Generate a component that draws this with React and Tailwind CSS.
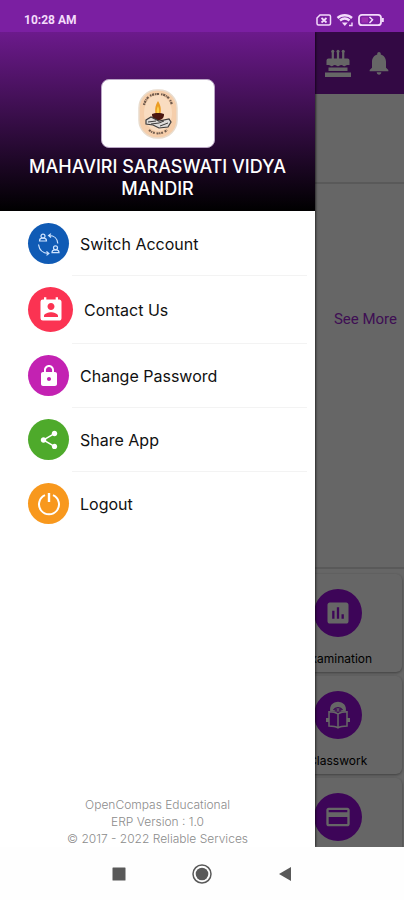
import {
  MdCreditCard,
  MdInsertChart,
  MdLock,
  MdNotifications,
  MdPermContactCalendar,
  MdShare,
} from 'react-icons/md'

function SwitchIcon() {
  return (
    <svg viewBox="0 0 24 24" className="size-6" fill="none" stroke="#cfe4ff" strokeWidth="1.2" aria-hidden="true">
      <circle cx="6" cy="4.2" r="2" />
      <path d="M2.5 9c0-1.6 1-2.6 2.2-2.8h2.6C8.500 6.400 9.500 7.400 9.500 9z" />
      <circle cx="18.500" cy="15.800" r="2" />
      <path d="M15 20.600c0-1.600 1-2.600 2.200-2.800h2.600c1.200.2 2.200 1.200 2.200 2.800z" />
      <path d="M12 3.500c5 0 8.500 3 8.800 8M14 1.600l-2.400 1.900 2.400 2" />
      <path d="M1.500 12.500c.8 5.500 4.500 8.800 9.800 9M9.500 19.400l2.400 2.100-2.400 1.900" />
    </svg>
  )
}

function PowerIcon() {
  return (
    <svg viewBox="0 0 24 24" className="size-6" fill="none" stroke="currentColor" strokeWidth="2" aria-hidden="true">
      <path d="M8 3.200A10 10 0 1 0 16 3.200" />
      <path d="M12 1v9" strokeWidth="2.400" />
    </svg>
  )
}

function CakeIcon() {
  return (
    <svg viewBox="0 0 26 28" className="h-7 w-[26px]" fill="currentColor" aria-hidden="true">
      <path d="M6.700 3h2.200v7H6.700zM11.900 3h2.200v7h-2.200zM17.100 3h2.200v7h-2.200z" />
      <circle cx="7.800" cy="2.200" r="1.500" />
      <circle cx="13" cy="2.200" r="1.500" />
      <circle cx="18.200" cy="2.200" r="1.500" />
      <path d="M3.500 9.500h19a2 2 0 0 1 2 2V16h-2.200c-1.500 0-1.500 1.200-3 1.200S17.700 16 16.200 16s-1.600 1.200-3.200 1.200S11.300 16 9.800 16s-1.600 1.200-3.100 1.200S5.200 16 3.700 16H1.500v-4.500a2 2 0 0 1 2-2z" />
      <path d="M3.500 18.500h19V22h-19zM0 23.500h26V28H0z" />
    </svg>
  )
}

function ReaderIcon() {
  return (
    <svg viewBox="0 0 24 28" className="h-7 w-6" fill="none" stroke="currentColor" strokeWidth="1.500" aria-hidden="true">
      <path d="M5 10.500C4 4.500 7.500 1.500 12 1.500s8 3 7 9" fill="currentColor" />
      <path d="M7.500 9c1-1.800 2.500-2.400 4.500-2.400S15.500 7.200 16.500 9" stroke="#9a0edc" strokeWidth="1.200" />
      <circle cx="10" cy="9" r="1" stroke="#9a0edc" strokeWidth="1" />
      <circle cx="14" cy="9" r="1" stroke="#9a0edc" strokeWidth="1" />
      <path d="M12 13c-2.500-1.800-5-2.300-9-2.300V25c4 0 6.500.3 9 1.800 2.500-1.500 5-1.800 9-1.800V10.700c-4 0-6.500.5-9 2.300zM12 13v13" fill="#9a0edc" />
      <path d="M1.500 17v4M22.500 17v4" strokeWidth="3" />
    </svg>
  )
}

function SchoolLogo() {
  return (
    <svg viewBox="0 0 40 50" className="h-[50px] w-10" role="img" aria-label="School emblem">
      <rect x="1" y="1" width="38" height="48" rx="18" fill="#f5ceab" stroke="#e9dccd" strokeWidth="1.500" />
      <ellipse cx="20" cy="24" rx="14" ry="18" fill="#f9dcc0" />
      <path d="M6 16C8 8 13 5 20 5s12 3 14 11" fill="none" stroke="#6f5a4c" strokeWidth="2.200" strokeDasharray="1.500 .7 2.200 .8 1 .6 2.400 2" />
      <path d="M11 41c5 4.500 13 4.500 18 0" fill="none" stroke="#6f5a4c" strokeWidth="2" strokeDasharray="2 .6 1.300 .8 1.800 1.800" />
      <path d="M20 12c3 5 3.500 9 2 14h-4c-1.500-5-1-9 2-14z" fill="#eb9c24" />
      <path d="M20 17c1.500 3 1.500 6 .5 9h-1.500c-.8-3-.5-6 1-9z" fill="#fbd34d" />
      <path d="M14 25c2-1.500 10-1.500 12 0 0 4-2 6-6 6s-6-2-6-6z" fill="#4a1710" />
      <path d="M8 31l5-3 8 4 10-2 2 3-3 5-9 1-6-3-7-1z" fill="#dddbd9" stroke="#3d3b3b" strokeWidth="1.200" />
      <path d="M10 33l8-1M13 35l8-1 5-2M22 37l8-3" stroke="#3d3b3b" strokeWidth="1" fill="none" />
    </svg>
  )
}

function StatusBar() {
  return (
    <header className="flex h-8 shrink-0 items-center justify-between bg-[#7b1fa2] pt-2 pr-5 pl-6 text-[#f3dcfb]">
      <span className="font-[Roboto,sans-serif] text-xs font-bold">10:28 AM</span>
      <svg viewBox="0 0 68 14" className="h-[14px] w-[68px]" fill="none" stroke="currentColor" strokeWidth="1.500" aria-hidden="true">
        <path d="M4 2h9a1.500 1.500 0 0 1 1.500 1.500v7A1.500 1.500 0 0 1 13 12H2.500A1.500 1.500 0 0 1 1 10.500V5z" />
        <path d="M5.500 5l5 4.500M10.500 5l-5 4.500" strokeWidth="1.700" />
        <path d="M21.500 5c4-3.700 10.500-3.700 14.500 0M24 7.500c3-2.500 6.500-2.500 9.500 0" strokeWidth="2.400" />
        <path d="M25.800 9.500h6L28.800 13z" fill="currentColor" stroke="none" />
        <path d="M33 12.500h3v-3" strokeWidth="1.400" />
        <rect x="43" y="1.800" width="22" height="10.400" rx="3" strokeWidth="1.800" />
        <path d="M66.800 5v4" strokeWidth="2" />
        <path d="M45.500 4.300h6.500v5.400h-6.500z" fill="#9c2fae" stroke="none" />
        <path d="M53.500 4l3 2.800-3 3.200" strokeWidth="1.500" />
      </svg>
    </header>
  )
}

const tiles = [
  { label: 'Examination', icon: <MdInsertChart className="size-7" /> },
  { label: 'Classwork', icon: <ReaderIcon /> },
  { label: '', icon: <MdCreditCard className="size-7" /> },
]

function Dashboard() {
  return (
    <div className="flex h-full flex-col bg-white">
      <div className="flex h-[62px] shrink-0 items-center justify-end gap-[14px] bg-[#7f18aa] pr-[11px] text-white">
        <button type="button" aria-label="Birthdays">
          <CakeIcon />
        </button>
        <button type="button" aria-label="Notifications">
          <MdNotifications className="size-7" />
        </button>
      </div>
      <div className="h-[90px] shrink-0 border-b-2 border-[#dedede]" />
      <div className="flex h-[385px] shrink-0 flex-col items-end border-b-2 border-[#dedede] pt-[123px] pr-[7px]">
        <a href="#more" className="font-[Roboto,sans-serif] text-[15px] leading-6 text-[#9c27d0]">
          See More
        </a>
      </div>
      <div className="flex flex-col items-end gap-1 pt-[5px] pr-[2px]">
        {tiles.map((tile, index) => (
          <button
            key={index}
            type="button"
            aria-label={tile.label || 'Fees'}
            className="flex h-[98px] w-[32%] shrink-0 flex-col items-center rounded-md bg-white pt-[15px] shadow-[0_1px_3px_rgba(0,0,0,0.4)]"
          >
            <span className="flex size-12 shrink-0 items-center justify-center rounded-full bg-[#9a0edc] text-white">
              {tile.icon}
            </span>
            <span className="mt-3 font-[Inter,sans-serif] text-xs leading-5 text-black">{tile.label}</span>
          </button>
        ))}
      </div>
    </div>
  )
}

const menuItems = [
  { label: 'Switch Account', tone: 'size-[41px] bg-[#105bb5]', icon: <SwitchIcon /> },
  { label: 'Contact Us', tone: 'size-[45px] bg-[#fb3352]', icon: <MdPermContactCalendar className="size-7" /> },
  { label: 'Change Password', tone: 'size-[41px] bg-[#c322b2]', icon: <MdLock className="size-6" /> },
  { label: 'Share App', tone: 'size-[41px] bg-[#4eaa2b]', icon: <MdShare className="size-[22px]" /> },
  { label: 'Logout', tone: 'size-[41px] bg-[#f8981d]', icon: <PowerIcon /> },
]

function Drawer() {
  return (
    <aside className="absolute inset-y-0 left-0 flex w-[78%] flex-col bg-white font-[Inter,sans-serif] shadow-[1px_0_2px_rgba(0,0,0,0.6)]">
      <div className="flex flex-col items-center bg-linear-to-b/srgb from-[#6c1a8c] to-black px-4 pt-[47px] pb-[11px]">
        <div className="flex h-[69px] w-[114px] items-center justify-center rounded-lg border border-[#b9a5c4] bg-white">
          <SchoolLogo />
        </div>
        <h1 className="mt-2 text-center text-lg leading-[22px] font-medium text-white">
          MAHAVIRI SARASWATI VIDYA MANDIR
        </h1>
      </div>
      <nav className="pt-px">
        {menuItems.map((item) => (
          <div key={item.label} className="group">
            <button type="button" className="flex w-full items-center gap-[11px] py-[11px] pl-7 text-left">
              <span className={`flex shrink-0 items-center justify-center rounded-full text-white ${item.tone}`}>
                {item.icon}
              </span>
              <span className="text-base text-[#111111]">{item.label}</span>
            </button>
            <div className="mr-2 ml-[72px] h-px bg-[#f3f3f3] group-last:hidden" />
          </div>
        ))}
      </nav>
      <footer className="mt-auto text-center text-xs leading-[17px] font-light text-[#8c8c8c]">
        <p>OpenCompas Educational</p>
        <p>ERP Version : 1.0</p>
        <p>© 2017 - 2022 Reliable Services</p>
      </footer>
    </aside>
  )
}

function SystemNav() {
  return (
    <div className="flex h-[53px] shrink-0 items-center justify-center gap-[66px] bg-[#fefefe] text-[#595959]">
      <button type="button" aria-label="Recent apps">
        <svg viewBox="0 0 14 14" className="size-[14px]" fill="currentColor">
          <rect x="0.500" y="0.500" width="13" height="13" rx="0.500" />
        </svg>
      </button>
      <button type="button" aria-label="Home">
        <svg viewBox="0 0 20 20" className="size-5" fill="currentColor">
          <circle cx="10" cy="10" r="9" fill="none" stroke="currentColor" strokeWidth="1.500" />
          <circle cx="10" cy="10" r="6.300" />
        </svg>
      </button>
      <button type="button" aria-label="Back">
        <svg viewBox="0 0 14 16" className="h-4 w-[14px]" fill="currentColor">
          <path d="M13 1v14L1 8z" />
        </svg>
      </button>
    </div>
  )
}

export default function App() {
  return (
    <div className="flex h-screen flex-col overflow-hidden bg-white">
      <StatusBar />
      <main className="relative min-h-0 flex-1 overflow-hidden">
        <Dashboard />
        <div className="absolute inset-0 bg-black/60" />
        <Drawer />
      </main>
      <SystemNav />
    </div>
  )
}
